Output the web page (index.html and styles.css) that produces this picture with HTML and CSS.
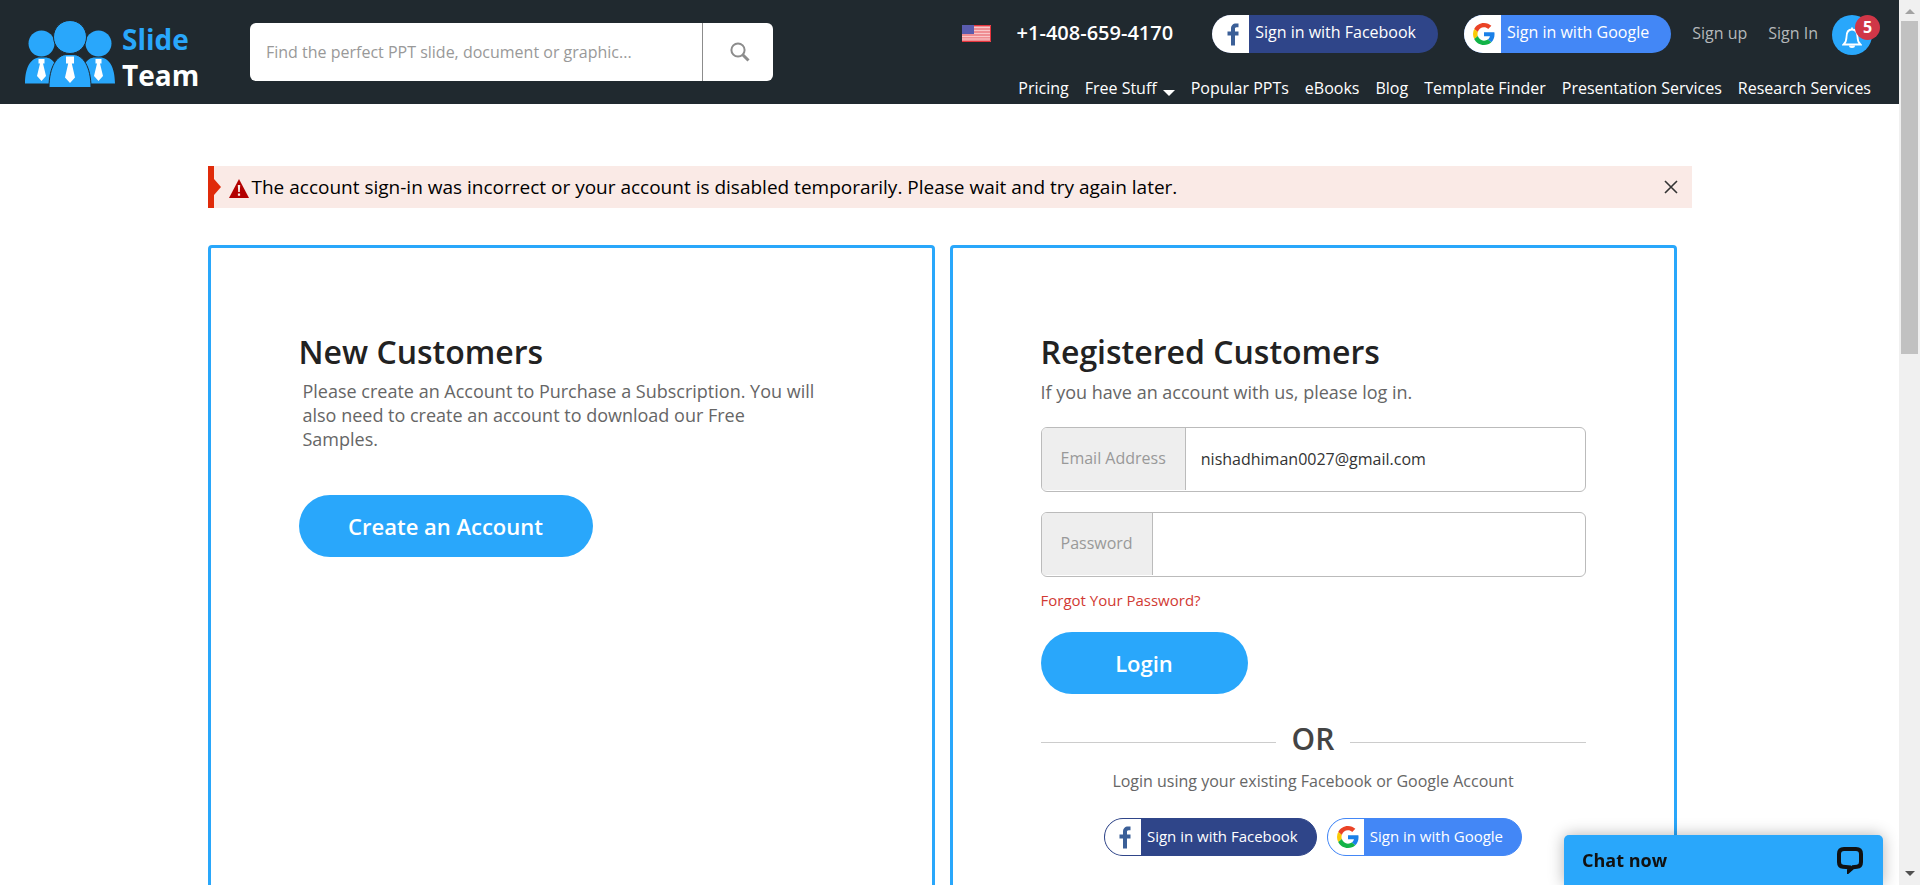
FILE: index.html
```html
<!DOCTYPE html>
<html lang="en">
<head>
<meta charset="utf-8">
<title>Customer Login - SlideTeam</title>
<link rel="stylesheet" href="styles.css">
</head>
<body>
<svg class="defs" aria-hidden="true">
  <symbol id="facebook" viewBox="0 0 12 23">
    <path fill="#3b5f97" d="M4 22.500V12.500H.5V8.500H4V6C4 2.200 6 .4 9 .4h2.500v3.800H9.600C8.300 4.200 8 4.900 8 6v2.500h3.500v4H8v10z"/>
  </symbol>
  <symbol id="google" viewBox="0 0 48 48">
    <path fill="#ea4326" d="M24 9.500c3.540 0 6.710 1.220 9.210 3.600l6.850-6.850C35.900 2.380 30.470 0 24 0 14.620 0 6.510 5.380 2.560 13.220l7.980 6.190C12.430 13.720 17.740 9.500 24 9.500z"/>
    <path fill="#1a80e8" d="M46.980 24.550c0-1.570-.15-3.090-.38-4.550H24v9.020h12.940c-.58 2.960-2.260 5.480-4.780 7.180l7.730 6c4.510-4.180 7.090-10.360 7.090-17.650z"/>
    <path fill="#fbca05" d="M10.530 28.590A14.500 14.500 0 0 1 9.770 24c0-1.600.27-3.140.76-4.590l-7.980-6.190A23.900 23.900 0 0 0 0 24c0 3.880.92 7.540 2.560 10.780z"/>
    <path fill="#12b347" d="M24 48c6.480 0 11.930-2.130 15.890-5.810l-7.730-6c-2.150 1.450-4.920 2.300-8.160 2.300-6.260 0-11.570-4.220-13.470-9.910l-7.980 6.190C6.510 42.620 14.620 48 24 48z"/>
  </symbol>
</svg>

<div class="window">
  <div class="page">
    <header class="header">
      <a class="logo" href="#" aria-label="Slide Team">
        <svg class="logo-mark" viewBox="0 0 91 67" aria-hidden="true">
          <g fill="#29a7fb">
            <circle cx="16.500" cy="22.500" r="13"/>
            <circle cx="73.500" cy="22.500" r="13"/>
            <path d="M0 62.500C0 46 6 36.500 15 36.500h5c8 0 14 8 14 26zM90 62.500C90 46 84 36.500 75 36.500h-5c-8 0-14 8-14 26z"/>
            <circle cx="45" cy="16" r="16.500" stroke="#20292f"/>
            <path stroke="#20292f" d="M24 66.500C24 46 32 33.500 42 33.500h6c10 0 18 12.500 18 33z"/>
          </g>
          <g fill="#fff">
            <path d="M13.500 38h6v4.500h-1.500l3 12.500-4.500 5-4.500-5 3-12.500h-1.500zM70.500 38h6v4.500H75l3 12.500-4.500 5-4.500-5 3-12.500h-1.500zM41 35.500h8v7h-2.200l3.200 14-5 5.500-5-5.500 3.200-14H41z"/>
          </g>
        </svg>
        <span class="logo-text"><span class="logo-top">Slide</span><span>Team</span></span>
      </a>

      <form class="search" role="search">
        <input type="search" aria-label="Search" placeholder="Find the perfect PPT slide, document or graphic...">
        <button type="button" aria-label="Search">
          <svg width="20" height="20" viewBox="0 0 20 20" fill="none" stroke="#8c8c8c" aria-hidden="true"><circle cx="8" cy="8" r="6.600" stroke-width="2"/><path d="M12.500 12.500l6 6" stroke-width="3"/></svg>
        </button>
      </form>

      <div class="header-side">
        <div class="account">
          <svg class="flag" viewBox="0 0 29 17" role="img" aria-label="United States">
            <path fill="#ef8d92" d="M0 0h29v17H0z"/>
            <path stroke="#f9c6c8" d="M0 2.500h29M0 5.500h29M0 8.500h29M0 11.500h29M0 14h29"/>
            <path fill="none" stroke="#e5343d" d="M0 .5h28.500v16H0"/>
            <path fill="#5a5cae" d="M0 0h12v9H0z"/>
          </svg>
          <a class="phone" href="#">+1-408-659-4170</a>
          <button type="button" class="social facebook"><span class="social-icon"><svg width="12" height="23"><use href="#facebook"/></svg></span><span class="social-label">Sign in with Facebook</span></button>
          <button type="button" class="social google"><span class="social-icon"><svg width="22" height="22"><use href="#google"/></svg></span><span class="social-label">Sign in with Google</span></button>
          <a class="account-link" href="#">Sign up</a>
          <a class="account-link" href="#">Sign In</a>
          <button type="button" class="bell" aria-label="Notifications">
            <svg width="20" height="22" viewBox="0 0 20 22" fill="none" stroke="#fff" stroke-width="1.800" aria-hidden="true"><path d="M10 .5v2M1.500 17.500h17c-2-1.800-3-4-3-7.500 0-5-2-7.500-5.500-7.500S4.500 5 4.500 10c0 3.500-1 5.700-3 7.500z"/><path d="M7 18.500h6a3 2.500 0 0 1-6 0z" fill="#fff" stroke="none"/></svg>
            <span class="badge">5</span>
          </button>
        </div>
        <nav class="nav">
          <a href="#">Pricing</a>
          <a href="#" class="has-menu">Free Stuff</a>
          <a href="#">Popular PPTs</a>
          <a href="#">eBooks</a>
          <a href="#">Blog</a>
          <a href="#">Template Finder</a>
          <a href="#">Presentation Services</a>
          <a href="#">Research Services</a>
        </nav>
      </div>
    </header>

    <main class="main">
      <div class="alert" role="alert">
        <svg class="alert-icon" width="20" height="19" viewBox="0 0 20 19" aria-hidden="true"><path fill="#b30000" d="M10 0l10 19H0z"/><path fill="#faeae6" d="M8.800 6h2.400l-.4 7H9.200zM8.900 14.500h2.200v2.200H8.900z"/></svg>
        <p>The account sign-in was incorrect or your account is disabled temporarily. Please wait and try again later.</p>
        <button type="button" class="close" aria-label="Close">
          <svg width="14" height="14" viewBox="0 0 14 14" stroke="#333" stroke-width="1.600" aria-hidden="true"><path d="M1 1l12 12M13 1L1 13"/></svg>
        </button>
      </div>

      <div class="panels">
        <section class="panel">
          <h2>New Customers</h2>
          <p class="intro">Please create an Account to Purchase a Subscription. You will also need to create an account to download our Free Samples.</p>
          <button type="button" class="primary create">Create an Account</button>
        </section>

        <section class="panel">
          <h2>Registered Customers</h2>
          <p class="lead">If you have an account with us, please log in.</p>
          <form>
            <div class="field">
              <label for="email">Email Address</label>
              <input id="email" type="email" value="nishadhiman0027@gmail.com">
            </div>
            <div class="field">
              <label for="password">Password</label>
              <input id="password" type="password">
            </div>
            <a class="forgot" href="#">Forgot Your Password?</a>
            <button type="button" class="primary login">Login</button>
          </form>
          <div class="divider">OR</div>
          <p class="hint">Login using your existing Facebook or Google Account</p>
          <div class="social-row">
            <button type="button" class="social small facebook"><span class="social-icon"><svg width="12" height="23"><use href="#facebook"/></svg></span><span class="social-label">Sign in with Facebook</span></button>
            <button type="button" class="social small google"><span class="social-icon"><svg width="22" height="22"><use href="#google"/></svg></span><span class="social-label">Sign in with Google</span></button>
          </div>
        </section>
      </div>
    </main>
  </div>

  <div class="scrollbar" aria-hidden="true">
    <span class="arrow up"></span>
    <span class="thumb"></span>
    <span class="arrow down"></span>
  </div>
</div>

<button type="button" class="chat">
  <span>Chat now</span>
  <svg width="26" height="27" viewBox="0 0 26 27" fill="none" stroke="#111" stroke-width="4" aria-hidden="true"><path d="M7 2h12q5 0 5 5v8q0 4.500-4 4.800l-4 .4-4 3.500v-3.400L6 19.800q-4-.3-4-4.800V7q0-5 5-5z"/></svg>
</button>
</body>
</html>
```
FILE: styles.css
```css
* {
  box-sizing: border-box;
}

body {
  margin: 0;
  background: #fff;
  color: #333;
  font: 16px/24px "Open Sans", "Noto Sans", sans-serif;
}

button,
input {
  margin: 0;
  border: 0;
  font: inherit;
}

button {
  cursor: pointer;
}

a {
  color: inherit;
  text-decoration: none;
}

p,
h2 {
  margin: 0;
}

.defs {
  display: none;
}

.window {
  display: flex;
  height: 100vh;
  overflow: hidden;
}

.page {
  flex: 1;
  min-width: 0;
}

/* Header */

.header {
  display: flex;
  height: 104px;
  padding: 0 19px 0 25px;
  background: #20292f;
  color: #fff;
}

.logo {
  display: flex;
  gap: 6px;
  width: 225px;
  padding-top: 21px;
}

.logo-mark {
  width: 91px;
  height: 67px;
}

.logo-text {
  display: flex;
  flex-direction: column;
  font-weight: 700;
  font-size: 28px;
  line-height: 36px;
}

.logo-top {
  color: #29a7fb;
}

.search {
  display: flex;
  width: 523px;
  height: 58px;
  margin-top: 23px;
  border-radius: 6px;
  background: #fff;
  overflow: hidden;
}

.search input {
  flex: 1;
  min-width: 0;
  padding: 0 16px;
  background: none;
  color: #333;
}

.search input::placeholder {
  color: #999;
}

.search button {
  display: flex;
  align-items: center;
  justify-content: center;
  width: 71px;
  padding: 0 0 0 4px;
  border-left: 1px solid #8c8c8c;
  background: none;
}

.header-side {
  display: flex;
  flex-direction: column;
  align-items: flex-end;
  margin-left: auto;
}

.account {
  display: flex;
  align-items: center;
  height: 38px;
  margin-top: 15px;
}

.flag {
  width: 29px;
  height: 17px;
  margin: 0 26px 2px 0;
}

.phone {
  margin: 0 39px 2px 0;
  font-weight: 600;
  font-size: 20px;
}

.social {
  display: flex;
  height: 38px;
  padding: 0;
  border-radius: 19px;
  color: #fff;
  overflow: hidden;
}

.facebook {
  background: #2f4589;
}

.google {
  background: #4387f6;
}

.social-icon {
  display: flex;
  align-items: center;
  justify-content: center;
  width: 37px;
  height: 100%;
  padding-left: 4px;
  background: #fff;
}

.social-label {
  padding: 5px 22px 0 6px;
}

.account .social {
  margin-right: 26px;
}

.account .google {
  margin-right: 21px;
}

.account-link {
  margin: 0 21px 2px 0;
  color: #b4b8ba;
}

.account-link + .bell {
  margin-left: -7px;
}

.bell {
  position: relative;
  display: flex;
  align-items: center;
  justify-content: center;
  width: 40px;
  height: 40px;
  margin: 2px 8px 0 0;
  padding: 6px 0 0;
  border-radius: 50%;
  background: #29a7fb;
}

.badge {
  position: absolute;
  top: 0;
  right: -8px;
  width: 25px;
  height: 25px;
  border-radius: 50%;
  background: #d03647;
  color: #fff;
  font-weight: 700;
}

.nav {
  display: flex;
  gap: 16px;
  margin: 23px 9px 0 0;
}

.has-menu::after {
  content: "";
  display: inline-block;
  margin-left: 6px;
  border: 6px solid transparent;
  border-top-color: #fff;
  border-bottom: 0;
  vertical-align: -2px;
}

/* Content */

.main {
  max-width: 1484px;
  margin: 0 auto;
  padding-top: 62px;
}

.alert {
  position: relative;
  display: flex;
  align-items: center;
  gap: 3px;
  height: 42px;
  padding: 0 14px 0 15px;
  border-left: 6px solid #e02b0a;
  background: #faeae6;
  color: #000;
  font-size: 19px;
}

.alert::before {
  content: "";
  position: absolute;
  top: 13px;
  left: 0;
  border: 8px solid transparent;
  border-left: 7px solid #e02b0a;
  border-right: 0;
}

.alert-icon {
  margin-top: 3px;
}

.close {
  display: flex;
  margin-left: auto;
  padding: 0;
  background: none;
}

.panels {
  display: grid;
  grid-template-columns: 1fr 1fr;
  gap: 15px;
  margin-top: 37px;
  padding-right: 15px;
}

.panel {
  min-height: 760px;
  padding: 82px 88px 40px;
  border: 3px solid #29a7fb;
  border-radius: 4px;
}

.panel h2 {
  color: #222;
  font-weight: 600;
  font-size: 32px;
  line-height: 44px;
}

.intro {
  max-width: 519px;
  margin: 5px 0 44px 4px;
  color: #666;
  font-size: 18px;
}

.lead {
  margin: 6px 0 23px;
  color: #666;
  font-size: 18px;
}

.primary {
  display: block;
  height: 62px;
  border-radius: 31px;
  background: #29a7fb;
  color: #fff;
  font-weight: 600;
  font-size: 22px;
}

.create {
  width: 294px;
}

.login {
  width: 207px;
}

.field {
  display: flex;
  height: 65px;
  margin-bottom: 20px;
  border: 1px solid #bbb;
  border-radius: 6px;
  overflow: hidden;
}

.field label {
  margin-bottom: 1px;
  padding: 18px 19px;
  border-right: 1px solid #bbb;
  background: #eee;
  color: #999;
}

.field input {
  flex: 1;
  min-width: 0;
  padding: 0 15px 1px;
  background: none;
  color: #333;
}

.forgot {
  display: block;
  margin: -9px 0 20px;
  color: #d13a33;
  font-size: 15px;
}

.divider {
  display: flex;
  align-items: center;
  gap: 16px;
  margin-top: 23px;
  color: #444;
  font-weight: 600;
  font-size: 30px;
  line-height: 44px;
}

.divider::before,
.divider::after {
  content: "";
  flex: 1;
  margin-top: 6px;
  border-top: 1px solid #ccc;
}

.hint {
  margin: 8px 0 25px;
  color: #666;
  text-align: center;
}

.social-row {
  display: flex;
  justify-content: center;
  gap: 10px;
}

.small {
  font-size: 15px;
}

.small .social-icon {
  width: 36px;
}

.small .social-label {
  padding-right: 18px;
}

.small.facebook {
  border: 1px solid #2f4589;
}

.small.google {
  border: 1px solid #4387f6;
}

/* Scrollbar */

.scrollbar {
  display: flex;
  flex-direction: column;
  align-items: center;
  width: 21px;
  padding: 9px 0;
  background: #f0f0f0;
}

.arrow {
  border: 5px solid transparent;
}

.up {
  border-top: 0;
  border-bottom-color: #a3a3a3;
}

.thumb {
  width: 17px;
  height: 333px;
  margin-top: 7px;
  background: #c1c1c1;
}

.down {
  margin-top: auto;
  border-bottom: 0;
  border-top-color: #505050;
}

/* Chat */

.chat {
  position: fixed;
  right: 37px;
  bottom: 0;
  display: flex;
  align-items: center;
  justify-content: space-between;
  width: 319px;
  height: 50px;
  padding: 0 20px 0 18px;
  border-radius: 5px 5px 0 0;
  background: #29a7fb;
  box-shadow: 0 0 16px rgba(0, 0, 0, 0.3);
  color: #111;
  font-weight: 700;
  font-size: 18px;
}
```
